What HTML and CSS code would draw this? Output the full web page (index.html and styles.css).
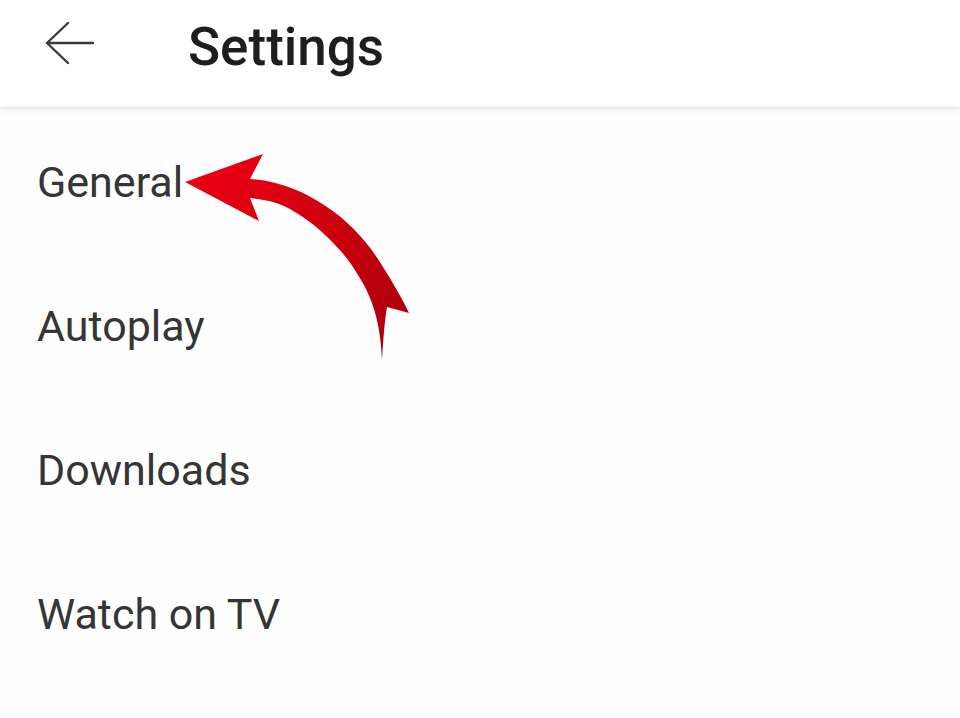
FILE: index.html
```html
<!DOCTYPE html>
<html>
<head>
<meta charset="utf-8">
<link rel="stylesheet" href="styles.css">
</head>
<body>
<div class="screen">
  <header class="topbar">
    <svg class="back" width="50" height="44" viewBox="0 0 50 44">
      <path d="M3 22 H49 M24 2 L3 22 L24 42" fill="none" stroke="#3a3a3a" stroke-width="2.4" stroke-linecap="round" stroke-linejoin="round"/>
    </svg>
    <h1 class="title">Settings</h1>
  </header>
  <ul class="menu">
    <li class="item">General</li>
    <li class="item">Autoplay</li>
    <li class="item">Downloads</li>
    <li class="item">Watch on TV</li>
  </ul>
  <svg class="pointer" width="960" height="718" viewBox="0 0 960 718">
    <defs>
      <linearGradient id="rg" x1="185" y1="170" x2="400" y2="350" gradientUnits="userSpaceOnUse">
        <stop offset="0" stop-color="#ec0012"/>
        <stop offset="0.5" stop-color="#d0000f"/>
        <stop offset="1" stop-color="#a8000c"/>
      </linearGradient>
    </defs>
    <path d="M185 182 L263 154 L250 179 C280 181 305 192 327 207 C350 222 370 245 383 267 C393 283 403 300 409 313 L387 307 C384 325 383 345 382 360 C381 338 378 308 361 280 C353 266 345 255 336 246 C327 236 317 227 307 220 C296 212 284 205 276 203 C267 200 258 199 250 198 L259 221 Z" fill="url(#rg)"/>
  </svg>
</div>
</body>
</html>
```
FILE: styles.css
```css
html, body {
  margin: 0;
  padding: 0;
  background: #ffffff;
}
.screen {
  position: relative;
  width: 960px;
  height: 718px;
  overflow: hidden;
  font-family: Roboto, "Liberation Sans", Arial, sans-serif;
  background: #fefefe;
}
.topbar {
  display: flex;
  align-items: flex-start;
  height: 108px;
  box-sizing: border-box;
  padding: 17px 0 0 44px;
  background: #ffffff;
  border-bottom: 1px solid #e4e4e4;
  box-shadow: 0 2px 6px rgba(0, 0, 0, 0.08);
}
.back {
  display: block;
  margin-top: 4px;
  flex: none;
}
.title {
  margin: 0 0 0 94px;
  font-size: 53px;
  line-height: 60px;
  font-weight: 500;
  color: #1e1e1e;
}
.menu {
  list-style: none;
  margin: 0;
  padding: 2px 0 0 37px;
}
.item {
  height: 144px;
  line-height: 144px;
  font-size: 43px;
  color: #353535;
}
.pointer {
  position: absolute;
  left: 0;
  top: 0;
  pointer-events: none;
}
```
